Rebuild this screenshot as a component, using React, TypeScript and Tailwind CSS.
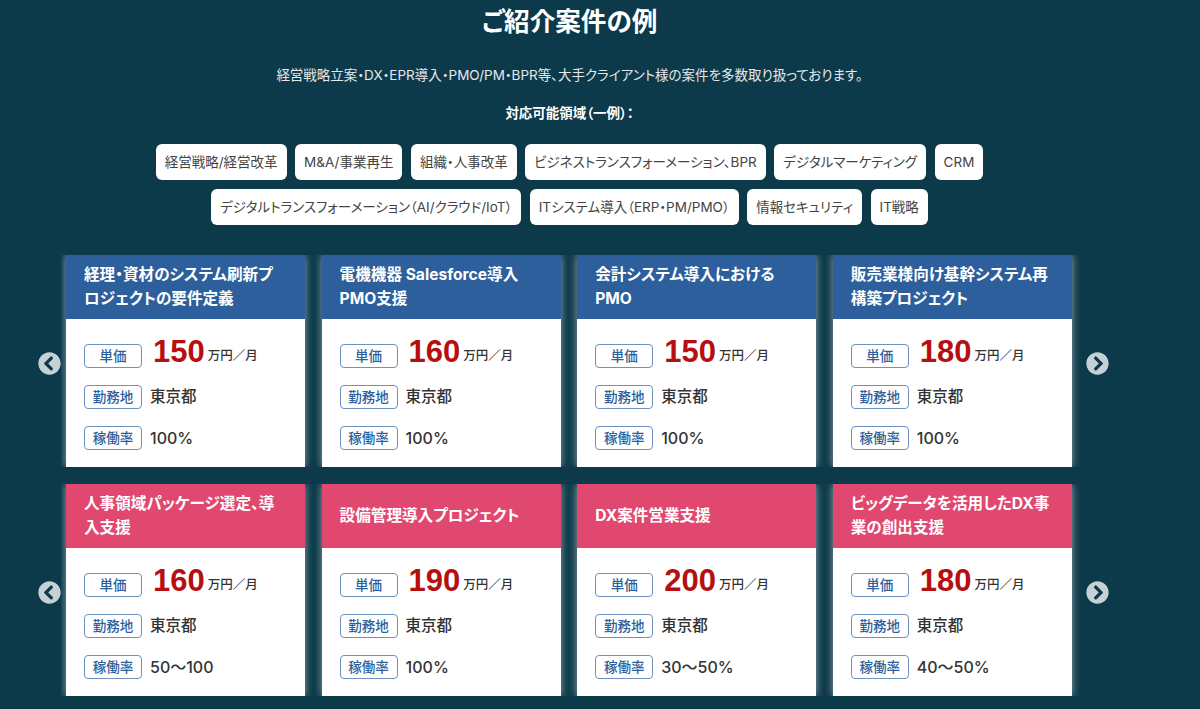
import React from "react";
import { FaChevronCircleLeft, FaChevronCircleRight } from "react-icons/fa";

interface Job {
  title: string;
  price: string;
  rate: string;
}

const topTags = [
  "経営戦略/経営改革",
  "M&A/事業再生",
  "組織・人事改革",
  "ビジネストランスフォーメーション、BPR",
  "デジタルマーケティング",
  "CRM",
];

const bottomTags = [
  "デジタルトランスフォーメーション（AI/クラウド/IoT）",
  "ITシステム導入（ERP・PM/PMO）",
  "情報セキュリティ",
  "IT戦略",
];

const blueJobs: Job[] = [
  { title: "経理・資材のシステム刷新プロジェクトの要件定義", price: "150", rate: "100%" },
  { title: "電機機器 Salesforce導入PMO支援", price: "160", rate: "100%" },
  { title: "会計システム導入におけるPMO", price: "150", rate: "100%" },
  { title: "販売業様向け基幹システム再構築プロジェクト", price: "180", rate: "100%" },
];

const pinkJobs: Job[] = [
  { title: "人事領域パッケージ選定、導入支援", price: "160", rate: "50〜100" },
  { title: "設備管理導入プロジェクト", price: "190", rate: "100%" },
  { title: "DX案件営業支援", price: "200", rate: "30〜50%" },
  { title: "ビッグデータを活用したDX事業の創出支援", price: "180", rate: "40〜50%" },
];

const Label = ({ children }: { children: React.ReactNode }) => (
  <span className="flex h-6 w-[58px] shrink-0 items-center justify-center rounded-[4px] border border-[#6d92c0] text-[13.5px] font-medium text-[#2d5f9c]">
    {children}
  </span>
);

const JobCard = ({ job, headerClass }: { job: Job; headerClass: string }) => (
  <div className="flex w-[239px] shrink-0 flex-col bg-white shadow-[0_0_8px_rgba(255,255,255,0.55)]">
    <div className={`flex h-16 items-center px-[18px] text-[15.6px] leading-6 font-bold text-white ${headerClass}`}>
      <p>{job.title}</p>
    </div>
    <div className="flex h-[148px] flex-col px-[18px] pt-[25px] text-[#333333]">
      <div className="flex h-[24px] items-center">
        <Label>単価</Label>
        <span className="relative -top-[5px] ml-[11px] font-['Liberation_Sans'] text-[31px] leading-none font-bold text-[#b70f0f]">
          {job.price}
        </span>
        <span className="ml-[3px] text-[12.5px] font-medium">万円／月</span>
      </div>
      <div className="mt-[17px] flex h-[24px] items-center gap-2">
        <Label>勤務地</Label>
        <span className="text-[15.5px] font-medium">東京都</span>
      </div>
      <div className="mt-[17px] flex h-[24px] items-center gap-2">
        <Label>稼働率</Label>
        <span className="text-base font-medium">{job.rate}</span>
      </div>
    </div>
  </div>
);

const JobRow = ({ jobs, headerClass }: { jobs: Job[]; headerClass: string }) => (
  <div className="flex items-center pl-[38px]">
    <FaChevronCircleLeft className="mt-[5px] h-[23px] w-[23px] shrink-0 text-[#c6d1d6]" />
    <div className="flex w-[1023px] shrink-0 gap-[16.6px] overflow-hidden pl-[5px] pr-[8px]">
      {jobs.map((job) => (
        <JobCard key={job.title} job={job} headerClass={headerClass} />
      ))}
    </div>
    <FaChevronCircleRight className="mt-[5px] ml-[2px] h-[23px] w-[23px] shrink-0 text-[#c6d1d6]" />
  </div>
);

const Tag = ({ children }: { children: React.ReactNode }) => (
  <span className="flex h-9 items-center rounded-md bg-white px-[9px] text-[13.5px] text-[#444444]">
    {children}
  </span>
);

export default function App() {
  return (
    <div className="min-h-screen overflow-hidden bg-[#0d3a4a] font-['Inter','Noto_Sans_CJK_JP',sans-serif] [font-feature-settings:'palt']">
      <div className="pr-[61px]">
        <h1 className="mt-[4px] text-center text-[25.6px] leading-9 font-bold text-white">ご紹介案件の例</h1>
        <p className="mt-[25px] text-center text-[13.5px] leading-5 text-[#e4e9eb]">
          経営戦略立案・DX・EPR導入・PMO/PM・BPR等、大手クライアント様の案件を多数取り扱っております。
        </p>
        <p className="mt-[18px] text-center text-[13.5px] leading-5 font-bold text-white">対応可能領域（一例）：</p>

        <div className="mt-[21px] flex flex-col items-center gap-[9px]">
          <div className="flex gap-[8.5px]">
            {topTags.map((tag) => (
              <Tag key={tag}>{tag}</Tag>
            ))}
          </div>
          <div className="flex gap-[8.5px]">
            {bottomTags.map((tag) => (
              <Tag key={tag}>{tag}</Tag>
            ))}
          </div>
        </div>
      </div>

      <div className="mt-[30px] flex flex-col gap-[17px]">
        <JobRow jobs={blueJobs} headerClass="bg-[#2d5f9c]" />
        <JobRow jobs={pinkJobs} headerClass="bg-[#e04870]" />
      </div>
    </div>
  );
}
